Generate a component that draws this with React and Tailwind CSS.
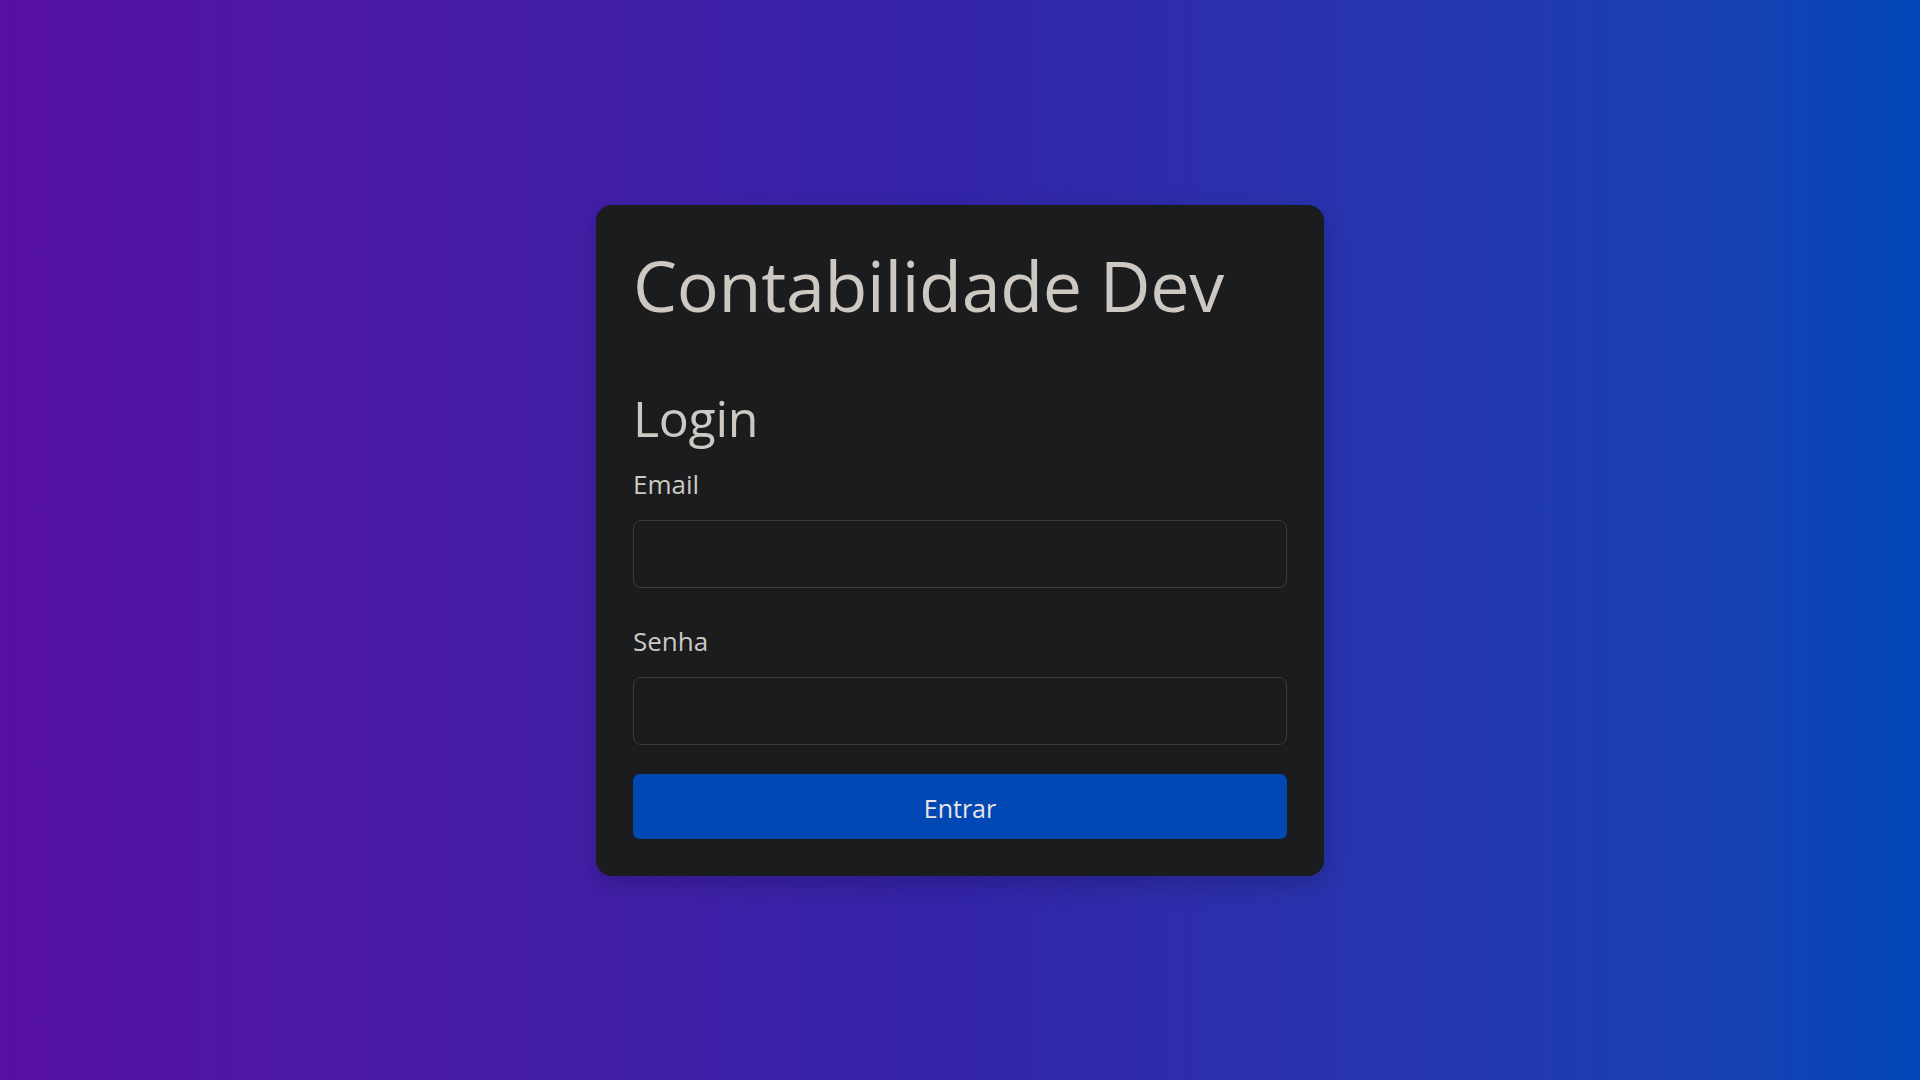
export default function App() {
  return (
    <div className="min-h-screen w-full flex items-center justify-center bg-gradient-to-r from-[#560ea3] via-[#3324a9] to-[#0046b6] font-['Open_Sans',sans-serif]">
      <div className="w-[728px] bg-[#1b1c1e] rounded-[16px] p-[37px] shadow-[0_8px_24px_rgba(0,0,0,0.2)]">
        <h1 className="text-[70px] leading-[86px] text-[#cdc8c1] font-normal tracking-[-0.3px]">Contabilidade Dev</h1>

        <form className="mt-[61px] flex flex-col" onSubmit={(e) => e.preventDefault()}>
          <h2 className="text-[50px] leading-[58px] text-[#cdc8c1] font-normal mb-[18px] tracking-[-0.3px]">Login</h2>

          <label htmlFor="email" className="text-[26px] leading-[39px] text-[#cdc8c1] mb-4">Email</label>
          <input
            id="email"
            type="email"
            className="h-[68px] w-full rounded-[8px] border border-[#3a3c3f] bg-[#1b1c1e] px-4 text-[24px] text-[#d8d4cf] outline-none"
          />

          <label htmlFor="senha" className="mt-[34px] text-[26px] leading-[39px] text-[#cdc8c1] mb-4">Senha</label>
          <input
            id="senha"
            type="password"
            className="h-[68px] w-full rounded-[8px] border border-[#3a3c3f] bg-[#1b1c1e] px-4 text-[24px] text-[#d8d4cf] outline-none"
          />

          <button
            type="submit"
            className="mt-[29px] h-[65px] w-full rounded-[7px] bg-[#0148b5] pt-[5px] text-[25px] text-[#e8e6e3]"
          >
            Entrar
          </button>
        </form>
      </div>
    </div>
  );
}
